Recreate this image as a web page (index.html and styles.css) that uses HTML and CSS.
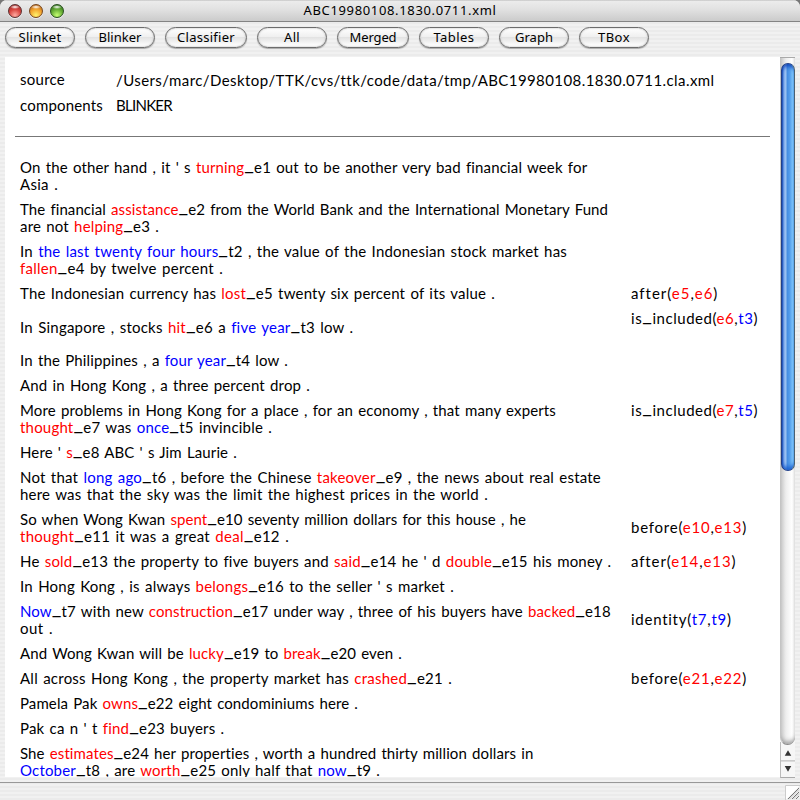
FILE: index.html
```
<!DOCTYPE html>
<html lang="en">
<head>
<meta charset="utf-8">
<title>ABC19980108.1830.0711.xml</title>
<link rel="stylesheet" href="styles.css">
</head>
<body>
<div class="window">
  <header class="titlebar">
    <div class="lights"><div class="light close"></div><div class="light minimize"></div><div class="light zoom"></div></div>
    <h1><span data-width="193">ABC19980108.1830.0711.xml</span></h1>
  </header>
  <nav class="toolbar">
    <button><span data-width="43">Slinket</span></button>
    <button><span data-width="43">Blinker</span></button>
    <button class="wide"><span data-width="58">Classifier</span></button>
    <button><span data-width="16">All</span></button>
    <button class="medium"><span data-width="47">Merged</span></button>
    <button><span data-width="41">Tables</span></button>
    <button><span data-width="38">Graph</span></button>
    <button><span data-width="32">TBox</span></button>
  </nav>
  <main class="content">
    <section class="document">
      <dl class="meta">
        <dt class="raised"><span data-width="45">source</span></dt><dd><span data-width="598">/Users/marc/Desktop/TTK/cvs/ttk/code/data/tmp/ABC19980108.1830.0711.cla.xml</span></dd>
        <dt><span data-width="83">components</span></dt><dd><span data-width="56">BLINKER</span></dd>
      </dl>
      <hr>
      <div class="rows">
        <div class="row"><p><span data-width="567">On the other hand , it ' s <b>turning</b><i>_</i>e1 out to be another very bad financial week for</span><br><span data-width="38">Asia .</span></p></div>
        <div class="row"><p><span data-width="588">The financial <b>assistance</b><i>_</i>e2 from the World Bank and the International Monetary Fund</span><br><span data-width="139">are not <b>helping</b><i>_</i>e3 .</span></p></div>
        <div class="row"><p><span data-width="547">In <em>the last twenty four hours</em><i>_</i>t2 , the value of the Indonesian stock market has</span><br><span data-width="203"><b>fallen</b><i>_</i>e4 by twelve percent .</span></p></div>
        <div class="row"><p><span data-width="475">The Indonesian currency has <b>lost</b><i>_</i>e5 twenty six percent of its value .</span></p><p><span data-width="87">after(<b>e5</b>,<b>e6</b>)</span></p></div>
        <div class="row"><p><span data-width="333">In Singapore , stocks <b>hit</b><i>_</i>e6 a <em>five year</em><i>_</i>t3 low .</span></p><p class="list"><span data-width="127">is<i>_</i>included(<b>e6</b>,<em>t3</em>)</span></p></div>
        <div class="row"><p><span data-width="268">In the Philippines , a <em>four year</em><i>_</i>t4 low .</span></p></div>
        <div class="row"><p><span data-width="290">And in Hong Kong , a three percent drop .</span></p></div>
        <div class="row"><p><span data-width="536">More problems in Hong Kong for a place , for an economy , that many experts</span><br><span data-width="252"><b>thought</b><i>_</i>e7 was <em>once</em><i>_</i>t5 invincible .</span></p><p class="list"><span data-width="127">is<i>_</i>included(<b>e7</b>,<em>t5</em>)</span></p></div>
        <div class="row"><p><span data-width="217">Here ' <b>s</b><i>_</i>e8 ABC ' s Jim Laurie .</span></p></div>
        <div class="row"><p><span data-width="581">Not that <em>long ago</em><i>_</i>t6 , before the Chinese <b>takeover</b><i>_</i>e9 , the news about real estate</span><br><span data-width="468">here was that the sky was the limit the highest prices in the world .</span></p></div>
        <div class="row"><p><span data-width="506">So when Wong Kwan <b>spent</b><i>_</i>e10 seventy million dollars for this house , he</span><br><span data-width="269"><b>thought</b><i>_</i>e11 it was a great <b>deal</b><i>_</i>e12 .</span></p><p class="centered"><span data-width="116">before(<b>e10</b>,<b>e13</b>)</span></p></div>
        <div class="row"><p><span data-width="591">He <b>sold</b><i>_</i>e13 the property to five buyers and <b>said</b><i>_</i>e14 he ' d <b>double</b><i>_</i>e15 his money .</span></p><p><span data-width="105">after(<b>e14</b>,<b>e13</b>)</span></p></div>
        <div class="row"><p><span data-width="434">In Hong Kong , is always <b>belongs</b><i>_</i>e16 to the seller ' s market .</span></p></div>
        <div class="row"><p><span data-width="591"><em>Now</em><i>_</i>t7 with new <b>construction</b><i>_</i>e17 under way , three of his buyers have <b>backed</b><i>_</i>e18</span><br><span data-width="33">out .</span></p><p class="centered"><span data-width="101">identity(<em>t7</em>,<em>t9</em>)</span></p></div>
        <div class="row"><p><span data-width="382">And Wong Kwan will be <b>lucky</b><i>_</i>e19 to <b>break</b><i>_</i>e20 even .</span></p></div>
        <div class="row"><p><span data-width="432">All across Hong Kong , the property market has <b>crashed</b><i>_</i>e21 .</span></p><p><span data-width="116">before(<b>e21</b>,<b>e22</b>)</span></p></div>
        <div class="row"><p><span data-width="338">Pamela Pak <b>owns</b><i>_</i>e22 eight condominiums here .</span></p></div>
        <div class="row"><p><span data-width="204">Pak ca n ' t <b>find</b><i>_</i>e23 buyers .</span></p></div>
        <div class="row"><p><span data-width="514">She <b>estimates</b><i>_</i>e24 her properties , worth a hundred thirty million dollars in</span><br><span data-width="360"><em>October</em><i>_</i>t8 , are <b>worth</b><i>_</i>e25 only half that <em>now</em><i>_</i>t9 .</span></p></div>
      </div>
    </section>
    <aside class="scrollbar">
      <div class="track"><div class="thumb"></div></div>
      <svg class="arrows" width="15" height="36" viewBox="0 0 15 36"><path d="M0 19.5h15" stroke="#aaa"/><path d="M7.5 8l3.5 6H4zM7.5 31L4 25h7z" fill="#333"/></svg>
    </aside>
  </main>
  <footer class="status">
    <svg width="15" height="15" viewBox="0 0 15 15"><path d="M.5 15V.5H15" fill="#fff" stroke="#ccc"/><path d="M3 14L14 3M7 14l7-7M11 14l3-3" stroke="#777"/><path d="M4.5 14L14 4.5M8.5 14L14 8.5" stroke="#ccc"/></svg>
  </footer>
</div>
<script src="fit.js"></script>
</body>
</html>
```
FILE: styles.css
```
* { box-sizing: border-box; }
body { margin: 0; width: 800px; height: 800px; overflow: hidden; background: #777; color: #000; font-family: Lato, "Liberation Sans", sans-serif; font-size: 15px; line-height: 17px; }
.window { height: 800px; display: flex; flex-direction: column; overflow: hidden; border-radius: 7px 7px 0 0; background: repeating-linear-gradient(#f1f1f1 0 2px, #ebebeb 2px 4px); }
.titlebar { height: 22px; flex: none; display: grid; grid-template-columns: 72px 1fr 72px; align-items: center; background: linear-gradient(#b5b5b5 0, #ececec 1px, #e2e2e2 9px, #cbcbcb 21px); border-bottom: 1px solid #848484; }
.lights { display: flex; gap: 7px; padding-left: 8px; }
.light { width: 14px; height: 14px; border-radius: 50%; border: 1px solid #5b3030; box-shadow: 0 1px 0 #fff9; }
.close { background: radial-gradient(ellipse 5px 2px at 50% 2px, #fff, #fff0), radial-gradient(circle at 50% 85%, #ffaaa0, #d94640 50%, #8e201e); }
.minimize { border-color: #76451c; background: radial-gradient(ellipse 5px 2px at 50% 2px, #fff, #fff0), radial-gradient(circle at 50% 85%, #fff36c, #f3a52e 50%, #a5541a); }
.zoom { border-color: #284f1e; background: radial-gradient(ellipse 5px 2px at 50% 2px, #fff, #fff0), radial-gradient(circle at 50% 85%, #c6ff73, #66ad35 50%, #245f18); }
h1 { margin: 0; text-align: center; font: 400 13px/19px "Noto Sans", sans-serif; }
h1 span { vertical-align: top; }
.toolbar { height: 35px; flex: none; display: flex; gap: 10px; align-items: flex-start; padding: 5px 5px 0; }
button { width: 70px; height: 21px; padding: 0 0 1px; border: 1px solid #6c6c6c; border-radius: 11px; color: #000; background: linear-gradient(#fff, #f0f0f0 45%, #e3e3e3 50%, #fcfcfc 90%); box-shadow: 0 1px 1px #aaa, inset 0 0 2px #aaa; font: 400 13px/18px "Noto Sans", sans-serif; }
.wide { width: 82px; }
.medium { width: 72px; }
.content { height: 720px; flex: none; display: flex; margin: 0 5px; background: #fff; }
.document { width: 775px; height: 720px; overflow: hidden; }
span { white-space: nowrap; display: inline-block; }
.meta { display: grid; grid-template-columns: 96px 1fr; grid-auto-rows: 25px; align-items: center; margin: 0; padding: 11px 15px 0; height: 79px; }
.meta dd { margin: 0; }
.meta .raised { padding-bottom: 3px; }
hr { height: 1px; border: 0; margin: 0 10px; background: #777; }
.rows { padding: 18px 0 0 15px; word-spacing: 1.2px; }
.row { display: grid; grid-template-columns: 600px 150px; column-gap: 11px; align-items: center; padding: 4px 0; }
p { margin: 0; }
p span { height: 17px; vertical-align: top; }
.list { min-height: 34px; }
.centered { padding-bottom: 1px; }
b { color: #f00; font-weight: inherit; }
em { color: #00f; font-style: normal; }
i { font-style: normal; font-size: 21px; line-height: 0; vertical-align: 3px; }
.scrollbar { width: 15px; display: flex; flex-direction: column; background: #f6f6f6; border-top: 1px solid #aaa; }
.track { height: 687px; flex: none; padding-top: 5px; border-left: 1px solid #c4c4c4; border-bottom: 1px solid #888; border-radius: 0 0 8px 8px; background: linear-gradient(90deg, #ccc, #eee 5px, #fff 11px, #e5e5e5); box-shadow: inset 0 -5px 5px -3px #999; }
.thumb { height: 408px; border: 1px solid #20408a; border-right-color: #4b6173; border-radius: 7px; background: linear-gradient(90deg, #1849b5 0, #84b0ee 2px, #a0c5f2 4px, #438be1 5px, #559fec 8px, #8bd2ff 11px, #70bdf0); box-shadow: inset 0 4px 4px -2px #0a3fb8, inset 0 -5px 4px -2px #1e62d0; }
.arrows { flex: none; margin-top: -3px; border-left: 1px solid #bbb; border-bottom: 1px solid #aaa; }
.status { flex: 1; margin-top: 5px; border-top: 1px solid #999; display: flex; justify-content: flex-end; align-items: flex-end; }
```
FILE: fit.js
```
// Track each line of text out to its measured column width.
for (const line of document.querySelectorAll('[data-width]')) {
  const natural = line.getBoundingClientRect().width;
  const gaps = line.textContent.length;
  line.style.letterSpacing = (line.dataset.width - natural) / gaps + 'px';
}
```
